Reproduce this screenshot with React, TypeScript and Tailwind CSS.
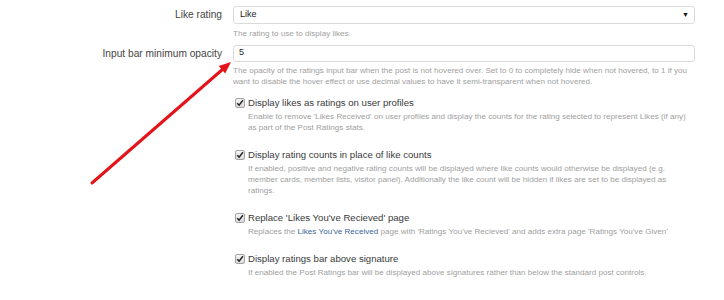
import React from "react";

const font = { fontFamily: '"Liberation Sans", Arial, sans-serif' };

const Check = () => (
  <span className="mt-[1.5px] w-[10px] h-[10px] shrink-0 rounded-[2px] border border-[#a3a3a3] bg-gradient-to-b from-[#f4f4f4] to-[#dcdcdc] flex items-center justify-center">
    <svg viewBox="0 0 10 10" className="w-[8px] h-[8px]">
      <path d="M1.5 5.2 L3.9 7.6 L8.6 1.6" fill="none" stroke="#222" strokeWidth="1.8" />
    </svg>
  </span>
);

const Option = ({ title, children, className = "" }: { title: string; children: React.ReactNode; className?: string }) => (
  <div className={`pl-[2px] ${className}`}>
    <div className="flex items-start gap-[3px]">
      <Check />
      <span className="text-[9.6px] leading-[13px] text-[#3a3a3a]">{title}</span>
    </div>
    <p className="pl-[13px] mt-[2px] text-[8.1px] leading-[11px] text-[#a0a0a0] w-[460px]">{children}</p>
  </div>
);

export default function App() {
  return (
    <div className="relative w-[724px] h-[300px] bg-white overflow-hidden" style={font}>
      <div className="grid grid-cols-[222px_462px] gap-x-[11px] pt-[6px]">
        <label className="text-right text-[10.2px] leading-[18px] text-[#444]">Like rating</label>
        <div>
          <div className="h-[18px] rounded-[3px] border border-[#dadada] bg-white flex items-center justify-between pl-[6px] pr-[5px]">
            <span className="text-[9px] text-[#222]">Like</span>
            <span className="text-[7px] text-[#111]">▼</span>
          </div>
          <p className="mt-[3.5px] text-[8.1px] leading-[11px] text-[#a0a0a0]">The rating to use to display likes.</p>
        </div>

        <label className="mt-[6px] text-right text-[10.2px] leading-[17px] text-[#444]">Input bar minimum opacity</label>
        <div className="mt-[6px]">
          <div className="h-[17px] rounded-[3px] border border-[#dadada] bg-white flex items-center pl-[5px]">
            <span className="text-[9px] text-[#222]">5</span>
          </div>
          <p className="mt-[3.5px] text-[8.1px] leading-[11px] text-[#a0a0a0]">
            The opacity of the ratings input bar when the post is not hovered over. Set to 0 to completely hide when not hovered, to 1 if you want to disable the hover effect or use decimal values to have it semi-transparent when not hovered.
          </p>

          <Option title="Display likes as ratings on user profiles" className="mt-[9px]">
            Enable to remove 'Likes Received' on user profiles and display the counts for the rating selected to represent Likes (if any) as part of the Post Ratings stats.
          </Option>
          <Option title="Display rating counts in place of like counts" className="mt-[15px]">
            If enabled, positive and negative rating counts will be displayed where like counts would otherwise be displayed (e.g. member cards, member lists, visitor panel). Additionally the like count will be hidden if likes are set to be displayed as ratings.
          </Option>
          <Option title="Replace 'Likes You've Recieved' page" className="mt-[15px]">
            Replaces the <span className="text-[#3b6a99]">Likes You've Received</span> page with 'Ratings You've Recieved' and adds extra page 'Ratings You've Given'
          </Option>
          <Option title="Display ratings bar above signature" className="mt-[15px]">
            If enabled the Post Ratings bar will be displayed above signatures rather than below the standard post controls.
          </Option>
        </div>
      </div>

      <svg className="absolute left-0 top-0 pointer-events-none" width="724" height="300">
        <line x1="92" y1="183" x2="223" y2="69" stroke="#e3141a" strokeWidth="3" strokeLinecap="round" />
        <polygon points="231,62 225.2,73.6 218.7,66.1" fill="#e3141a" />
      </svg>
    </div>
  );
}
